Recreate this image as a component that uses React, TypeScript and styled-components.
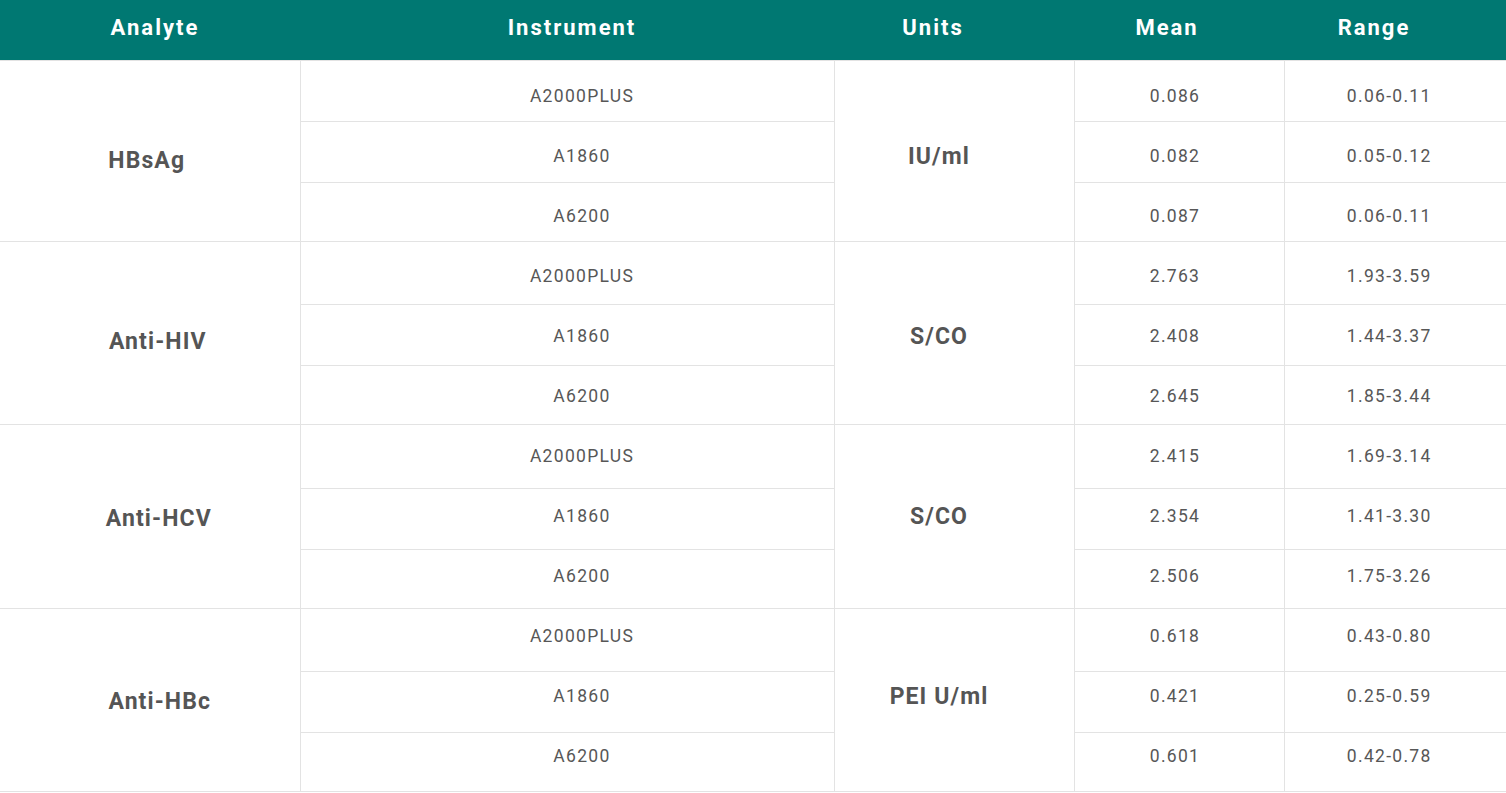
import React from "react";
import styled, { createGlobalStyle } from "styled-components";

const Global = createGlobalStyle`
  html, body { margin: 0; padding: 0; background: #fff; }
  body { font-family: Roboto, "Liberation Sans", sans-serif; }
`;

const Table = styled.table`
  width: 1506px;
  border-collapse: collapse;
  table-layout: fixed;
  color: #555;
`;

const HeadCell = styled.th<{ $w: number; $shift: number }>`
  width: ${(p) => p.$w}px;
  height: 60px;
  padding: 0 ${(p) => (p.$shift < 0 ? -2 * p.$shift : 0)}px 4px
    ${(p) => (p.$shift > 0 ? 2 * p.$shift : 0)}px;
  box-sizing: border-box;
  background: #007872;
  color: #fff;
  font-family: Roboto, "Liberation Sans", sans-serif;
  font-weight: 700;
  font-size: 22px;
  letter-spacing: 2px;
  text-align: center;
  vertical-align: middle;
`;

const Row = styled.tr<{ $h: number }>`
  height: ${(p) => p.$h}px;
`;

/* $x: horizontal offset of text from the column centre, $y: vertical offset */
const Cell = styled.td<{ $x?: number; $y?: number }>`
  padding-top: ${(p) => ((p.$y ?? 0) > 0 ? 2 * (p.$y ?? 0) : 0)}px;
  padding-bottom: ${(p) => ((p.$y ?? 0) < 0 ? -2 * (p.$y ?? 0) : 0)}px;
  padding-left: ${(p) => ((p.$x ?? 0) > 0 ? 2 * (p.$x ?? 0) : 0)}px;
  padding-right: ${(p) => ((p.$x ?? 0) < 0 ? -2 * (p.$x ?? 0) : 0)}px;
  border: 1px solid #e3e3e3;
  text-align: center;
  vertical-align: middle;
  font-size: 17.5px;
  letter-spacing: 1.3px;
  color: #575757;
  &:first-child { border-left: none; }
  &:last-child { border-right: none; }
`;

const BoldCell = styled(Cell)`
  font-weight: 700;
  font-size: 23px;
  letter-spacing: 1.1px;
  color: #555;
`;

type Group = {
  analyte: string;
  units: string;
  heights: number[];
  textY: number[];
  analyteY: number;
  unitsY: number;
  analyteX: number;
  rows: { inst: string; mean: string; range: string }[];
};

const groups: Group[] = [
  {
    analyte: "HBsAg",
    units: "IU/ml",
    heights: [61, 61, 59],
    textY: [5.5, 4.5, 4.5],
    analyteY: 10,
    unitsY: 5.5,
    analyteX: -3,
    rows: [
      { inst: "A2000PLUS", mean: "0.086", range: "0.06-0.11" },
      { inst: "A1860", mean: "0.082", range: "0.05-0.12" },
      { inst: "A6200", mean: "0.087", range: "0.06-0.11" },
    ],
  },
  {
    analyte: "Anti-HIV",
    units: "S/CO",
    heights: [63, 61, 59],
    textY: [3.5, 1.5, 1.5],
    analyteY: 8.5,
    unitsY: 3.5,
    analyteX: 8,
    rows: [
      { inst: "A2000PLUS", mean: "2.763", range: "1.93-3.59" },
      { inst: "A1860", mean: "2.408", range: "1.44-3.37" },
      { inst: "A6200", mean: "2.645", range: "1.85-3.44" },
    ],
  },
  {
    analyte: "Anti-HCV",
    units: "S/CO",
    heights: [64, 61, 59],
    textY: [0, -2.5, -2.5],
    analyteY: 2,
    unitsY: 0,
    analyteX: 9,
    rows: [
      { inst: "A2000PLUS", mean: "2.415", range: "1.69-3.14" },
      { inst: "A1860", mean: "2.354", range: "1.41-3.30" },
      { inst: "A6200", mean: "2.506", range: "1.75-3.26" },
    ],
  },
  {
    analyte: "Anti-HBc",
    units: "PEI U/ml",
    heights: [63, 61, 59],
    textY: [-3.5, -5.5, -5.5],
    analyteY: 1.5,
    unitsY: -3.5,
    analyteX: 10,
    rows: [
      { inst: "A2000PLUS", mean: "0.618", range: "0.43-0.80" },
      { inst: "A1860", mean: "0.421", range: "0.25-0.59" },
      { inst: "A6200", mean: "0.601", range: "0.42-0.78" },
    ],
  },
];

export default function App() {
  return (
    <>
      <Global />
      <Table>
        <thead>
          <tr>
            <HeadCell $w={300} $shift={5}>Analyte</HeadCell>
            <HeadCell $w={534} $shift={5}>Instrument</HeadCell>
            <HeadCell $w={240} $shift={-21}>Units</HeadCell>
            <HeadCell $w={210} $shift={-12}>Mean</HeadCell>
            <HeadCell $w={222} $shift={-21}>Range</HeadCell>
          </tr>
        </thead>
        <tbody>
          {groups.map((g) =>
            g.rows.map((r, i) => (
              <Row key={g.analyte + i} $h={g.heights[i]}>
                {i === 0 && (
                  <BoldCell rowSpan={3} $x={g.analyteX} $y={g.analyteY}>
                    {g.analyte}
                  </BoldCell>
                )}
                <Cell $x={15} $y={g.textY[i]}>{r.inst}</Cell>
                {i === 0 && (
                  <BoldCell rowSpan={3} $x={-15} $y={g.unitsY}>
                    {g.units}
                  </BoldCell>
                )}
                <Cell $x={-4} $y={g.textY[i]}>{r.mean}</Cell>
                <Cell $x={-6} $y={g.textY[i]}>{r.range}</Cell>
              </Row>
            ))
          )}
        </tbody>
      </Table>
    </>
  );
}
